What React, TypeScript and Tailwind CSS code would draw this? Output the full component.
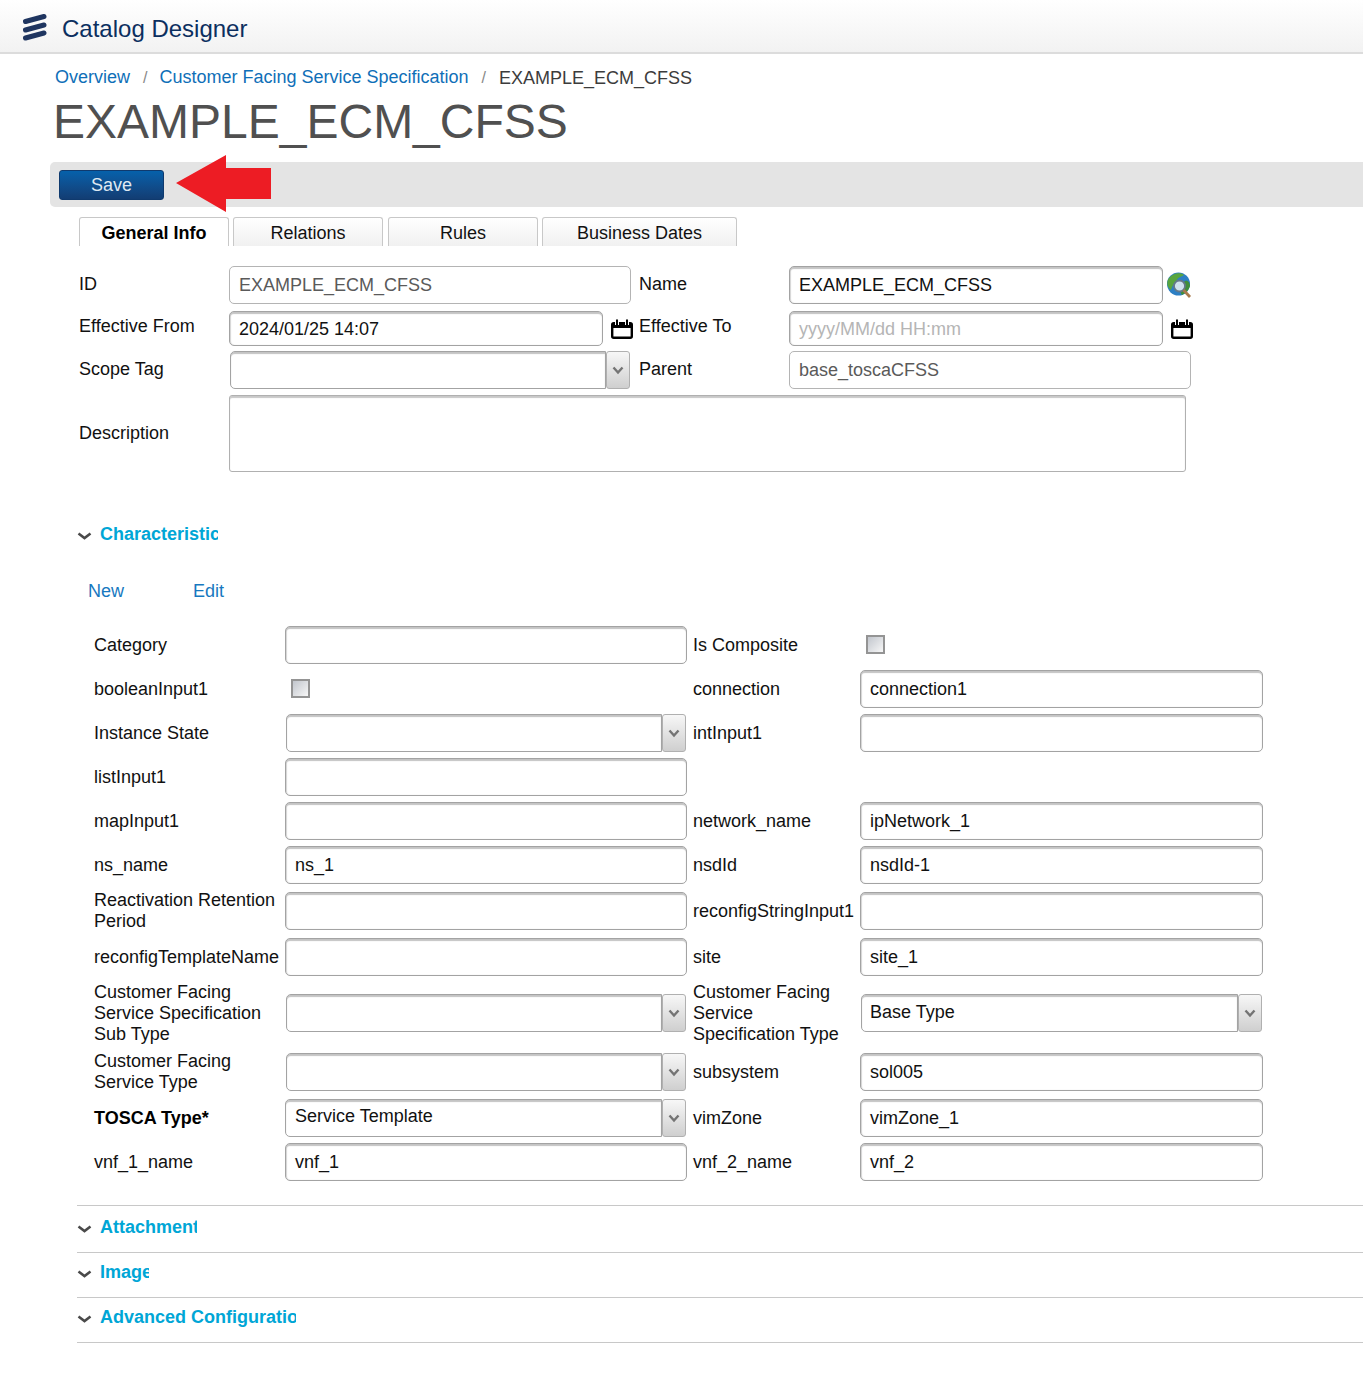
import React from 'react';

const EditField = ({ value, placeholder, className = '' }: { value?: string; placeholder?: string; className?: string }) => (
  <div className={`flex items-center h-[38px] pl-[9px] bg-white border border-[#a3a3a3] rounded-[5px] shadow-[inset_0_2px_1px_#c4c4c4,inset_1px_0_1px_#d8d8d8] overflow-hidden whitespace-nowrap ${className}`}>
    {value}
    {placeholder && <span className="text-[#b5b5b5]">{placeholder}</span>}
  </div>
);

const ReadField = ({ value, className = '' }: { value?: string; className?: string }) => (
  <div className={`flex items-center h-[38px] pl-[9px] bg-white border border-[#b4b4b4] rounded-[5px] text-[#5a5a5a] whitespace-nowrap ${className}`}>
    {value}
  </div>
);

const SelectField = ({ value, className = '', raised = false, inset = 'pl-[8px]' }: { value?: string; className?: string; raised?: boolean; inset?: string }) => (
  <div className={`flex h-[38px] ${className}`}>
    <div className={`flex-1 flex ${inset} bg-white border border-[#a3a3a3] rounded-l-[5px] shadow-[inset_0_2px_1px_#c4c4c4] whitespace-nowrap ${raised ? 'items-start pt-[6px]' : 'items-center pb-[2px]'}`}>
      {value}
    </div>
    <div className="w-[24px] flex items-center justify-center border border-[#b0b0b0] rounded-[3px] bg-gradient-to-b from-[#f7f7f7] to-[#cfcfcf]">
      <svg width="12" height="9" viewBox="0 0 12 9" className="-ml-[1px]">
        <path d="M1.5 1.5 L6 6.5 L10.5 1.5" fill="none" stroke="#747474" strokeWidth="2.4" />
      </svg>
    </div>
  </div>
);

const CheckBox = ({ className = '' }: { className?: string }) => (
  <div className={`w-[19px] h-[19px] border-2 border-[#949494] bg-gradient-to-br from-[#c2c6cd] to-[#f7f7f7] ${className}`} />
);

const CalendarIcon = () => (
  <svg width="22" height="20" viewBox="0 0 22 20" className="shrink-0">
    <rect x="1.2" y="4.2" width="19.6" height="14.6" rx="1.5" fill="#fff" stroke="#000" strokeWidth="2.4" />
    <rect x="1" y="4" width="20" height="5" fill="#000" />
    <path d="M6 0.5V6M16 0.5V6" stroke="#fff" strokeWidth="4" />
    <path d="M6 0.5V6M16 0.5V6" stroke="#000" strokeWidth="2" />
  </svg>
);

const GlobeIcon = () => (
  <svg width="26" height="26" viewBox="0 0 26 26" className="shrink-0">
    <circle cx="12.5" cy="12" r="11.5" fill="#2d7fc4" />
    <path d="M3 6 C7 0.5 15 0 18 3 C15 5 12 5 11 8 C8 11 6 14 5 18 C0.5 15 0.5 9 3 6Z" fill="#58a53e" />
    <path d="M19 9 C22 8 24 11 24 14 C23 18 20 21 16 23 C13 20 15 12 19 9Z" fill="#3f8f3a" />
    <circle cx="13.5" cy="14" r="5.5" fill="#cfe2ee" stroke="#64798a" strokeWidth="1.8" />
    <path d="M17.5 18 L24 25" stroke="#a8794d" strokeWidth="2.8" />
  </svg>
);

const Chevron = () => (
  <svg width="15" height="9" viewBox="0 0 15 9" className="shrink-0 mt-[3px]">
    <path d="M1.5 1.5 L7.5 6 L13.5 1.5" fill="none" stroke="#4a4a4a" strokeWidth="2.6" />
  </svg>
);

const SectionTitle = ({ title, width }: { title: string; width: string }) => (
  <div className="flex items-center gap-[8px]">
    <Chevron />
    <div className={`font-bold text-[#00a6d6] overflow-hidden whitespace-nowrap ${width}`}>{title}</div>
  </div>
);

const Tab = ({ label, active, width }: { label: string; active?: boolean; width: string }) => (
  <div className={`h-[29px] pt-[3px] flex items-center justify-center border border-b-0 border-[#c8c8c8] rounded-t-[3px] ${width} ${active ? 'bg-white font-bold text-black' : 'bg-gradient-to-b from-white to-[#f1f1f1] text-[#111]'}`}>
    {label}
  </div>
);

const App: React.FC = () => {
  return (
    <div className="w-[1363px] h-[1376px] bg-white overflow-hidden relative text-[18px] leading-[21px] text-[#111] font-['Liberation_Sans',Arial,sans-serif]">
      {/* Top bar */}
      <div className="h-[54px] flex items-center pl-[22px] gap-[14px] border-b-2 border-[#dcdcdc] bg-gradient-to-b from-white to-[#f2f2f2]">
        <svg width="26" height="30" viewBox="0 0 26 30">
          <path d="M3.5 10.5 L22 5.5" stroke="#1f3560" strokeWidth="5" strokeLinecap="round" />
          <path d="M3.5 19 L22 14" stroke="#1f3560" strokeWidth="5" strokeLinecap="round" />
          <path d="M3.5 27 L22 22" stroke="#1f3560" strokeWidth="5" strokeLinecap="round" />
        </svg>
        <div className="text-[24px] text-[#0c2f5f] pt-[5px]">Catalog Designer</div>
      </div>

      {/* Breadcrumb */}
      <div className="flex items-center h-[21px] mt-[13px] ml-[55px] whitespace-nowrap">
        <span className="text-[#0f6fb8]">Overview</span>
        <span className="ml-[13px] mr-[12px] text-[#888] text-[16px]">/</span>
        <span className="text-[#0f6fb8]">Customer Facing Service Specification</span>
        <span className="ml-[13px] mr-[13px] text-[#888] text-[16px]">/</span>
        <span className="text-[#3c3c3c] pt-[1px]">EXAMPLE_ECM_CFSS</span>
      </div>

      <div className="ml-[53px] mt-[5px] h-[69px] text-[48px] leading-[58px] text-[#505050] whitespace-nowrap">EXAMPLE_ECM_CFSS</div>

      {/* Toolbar */}
      <div className="h-[45px] ml-[50px] bg-[#e4e4e4] rounded-l-[5px] flex items-center pl-[9px]">
        <div className="w-[105px] h-[30px] pt-[1px] flex items-center justify-center rounded-[3px] border border-[#0f3a6e] bg-gradient-to-b from-[#0561ab] to-[#123d73] text-[#dfe9f2]">Save</div>
      </div>
      <svg width="98" height="60" viewBox="0 0 98 60" className="absolute left-[175px] top-[154px]">
        <path d="M1 29 L51 1 V14 H96 V45 H51 V58 Z" fill="#ed1c24" />
      </svg>

      {/* Tabs */}
      <div className="flex ml-[79px] mt-[10px]">
        <Tab label="General Info" active width="w-[150px]" />
        <Tab label="Relations" width="w-[150px] ml-[4px]" />
        <Tab label="Rules" width="w-[150px] ml-[5px]" />
        <Tab label="Business Dates" width="w-[195px] ml-[4px]" />
      </div>

      {/* General form */}
      <div className="ml-[79px] mt-[20px] flex flex-col w-[1120px]">
        <div className="flex h-[38px] items-center">
          <div className="w-[150px] -mt-[2px]">ID</div>
          <ReadField value="EXAMPLE_ECM_CFSS" className="w-[402px]" />
          <div className="w-[158px] pl-[8px] -mt-[2px]">Name</div>
          <EditField value="EXAMPLE_ECM_CFSS" className="w-[374px]" />
          <div className="ml-[3px]"><GlobeIcon /></div>
        </div>
        <div className="flex h-[35px] items-center mt-[7px]">
          <div className="w-[150px] -mt-[5px]">Effective From</div>
          <EditField value="2024/01/25 14:07" className="w-[374px] !h-[35px] pt-[1px]" />
          <div className="ml-[8px]"><CalendarIcon /></div>
          <div className="w-[156px] pl-[6px] -mt-[5px]">Effective To</div>
          <EditField placeholder="yyyy/MM/dd HH:mm" className="w-[374px] !h-[35px] pt-[1px]" />
          <div className="ml-[8px]"><CalendarIcon /></div>
        </div>
        <div className="flex h-[38px] items-center mt-[5px]">
          <div className="w-[151px] -mt-[2px]">Scope Tag</div>
          <SelectField className="w-[400px]" />
          <div className="w-[159px] pl-[9px] -mt-[2px]">Parent</div>
          <ReadField value="base_toscaCFSS" className="w-[402px]" />
        </div>
        <div className="flex items-center mt-[6px]">
          <div className="w-[150px]">Description</div>
          <div className="w-[957px] h-[77px] bg-white border border-[#b0b0b0] rounded-[3px] shadow-[inset_0_2px_1px_#c8c8c8]" />
        </div>
      </div>

      {/* Characteristics */}
      <div className="ml-[77px] mt-[52px]">
        <SectionTitle title="Characteristics" width="w-[118px]" />
      </div>
      <div className="flex ml-[88px] mt-[36px] text-[#1778c0]">
        <span className="w-[105px]">New</span>
        <span>Edit</span>
      </div>

      <div className="grid grid-cols-[191px_402px_6px_167px_403px] gap-y-[6px] items-center ml-[94px] mt-[24px]">
        <div>Category</div>
        <EditField />
        <div />
        <div>Is Composite</div>
        <CheckBox className="ml-[6px] -mt-[1px]" />

        <div>booleanInput1</div>
        <CheckBox className="ml-[6px] -mt-[1px]" />
        <div />
        <div>connection</div>
        <EditField value="connection1" />

        <div>Instance State</div>
        <SelectField className="mx-[1px]" />
        <div />
        <div>intInput1</div>
        <EditField />

        <div>listInput1</div>
        <EditField />
        <div />
        <div className="h-[38px]" />
        <div />

        <div>mapInput1</div>
        <EditField />
        <div />
        <div>network_name</div>
        <EditField value="ipNetwork_1" />

        <div>ns_name</div>
        <EditField value="ns_1" />
        <div />
        <div>nsdId</div>
        <EditField value="nsdId-1" />

        <div className="w-[185px]">Reactivation Retention Period</div>
        <EditField />
        <div />
        <div>reconfigStringInput1</div>
        <EditField />

        <div className="whitespace-nowrap">reconfigTemplateName</div>
        <EditField />
        <div />
        <div>site</div>
        <EditField value="site_1" />

        <div className="w-[175px]">Customer Facing Service Specification Sub Type</div>
        <SelectField className="mx-[1px] self-start mt-[12px]" />
        <div />
        <div className="w-[150px]">Customer Facing Service Specification Type</div>
        <SelectField value="Base Type" className="mx-[1px] self-start mt-[12px]" />

        <div className="w-[150px]">Customer Facing Service Type</div>
        <SelectField className="mx-[1px]" />
        <div />
        <div>subsystem</div>
        <EditField value="sol005" />

        <div className="font-bold text-black">TOSCA Type*</div>
        <SelectField value="Service Template" raised inset="pl-[9px]" className="mr-[1px]" />
        <div />
        <div>vimZone</div>
        <EditField value="vimZone_1" />

        <div>vnf_1_name</div>
        <EditField value="vnf_1" />
        <div />
        <div>vnf_2_name</div>
        <EditField value="vnf_2" />
      </div>

      {/* Collapsed sections */}
      <div className="ml-[77px] mt-[24px]">
        <div className="h-[47px] pt-[11px] border-t border-[#c8c8c8]">
          <SectionTitle title="Attachments" width="w-[97px]" />
        </div>
        <div className="h-[45px] pt-[9px] border-t border-[#c8c8c8]">
          <SectionTitle title="Images" width="w-[49px]" />
        </div>
        <div className="h-[46px] pt-[9px] border-y border-[#c8c8c8]">
          <SectionTitle title="Advanced Configuration" width="w-[196px]" />
        </div>
      </div>
    </div>
  );
};

export default App;
